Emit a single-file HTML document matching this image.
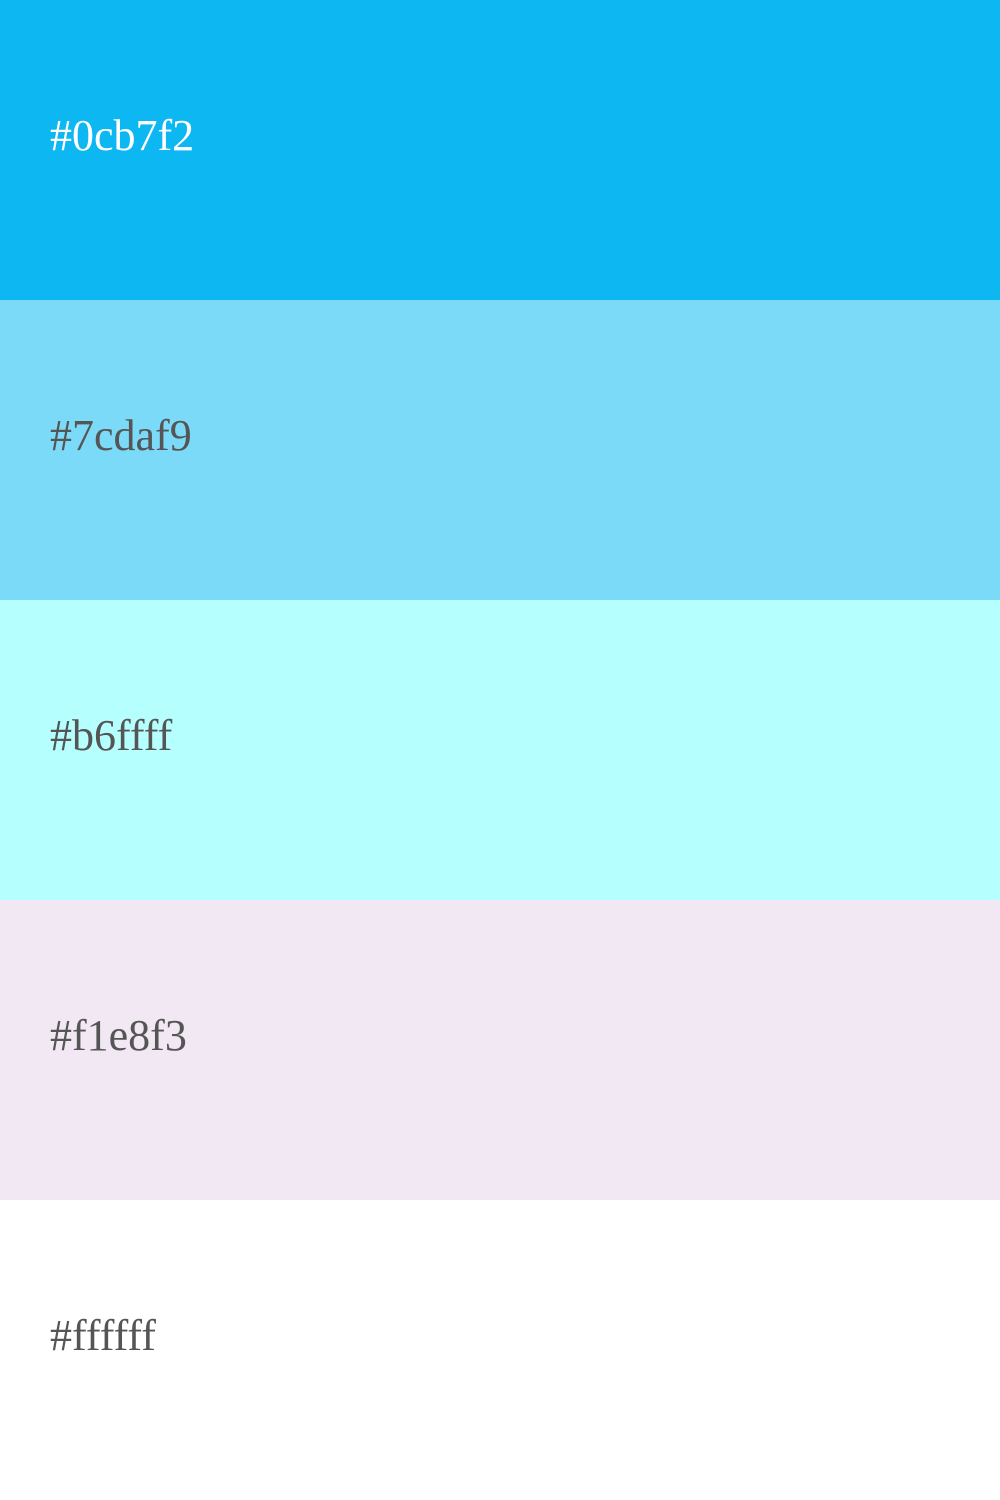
<!DOCTYPE html>
<html><head><style>
html,body{margin:0;padding:0;width:1000px;height:1500px;overflow:hidden}
.b{height:300px;position:relative;font-family:"Liberation Serif",serif;font-size:44px}
.b span{position:absolute;left:50px;top:111px;line-height:50px}
</style></head><body>
<div class="b" style="background:#0cb7f2;color:#fff"><span>#0cb7f2</span></div>
<div class="b" style="background:#7cdaf9;color:#555"><span>#7cdaf9</span></div>
<div class="b" style="background:#b6ffff;color:#555"><span>#b6ffff</span></div>
<div class="b" style="background:#f1e8f3;color:#555"><span>#f1e8f3</span></div>
<div class="b" style="background:#ffffff;color:#555"><span>#ffffff</span></div>
</body></html>
